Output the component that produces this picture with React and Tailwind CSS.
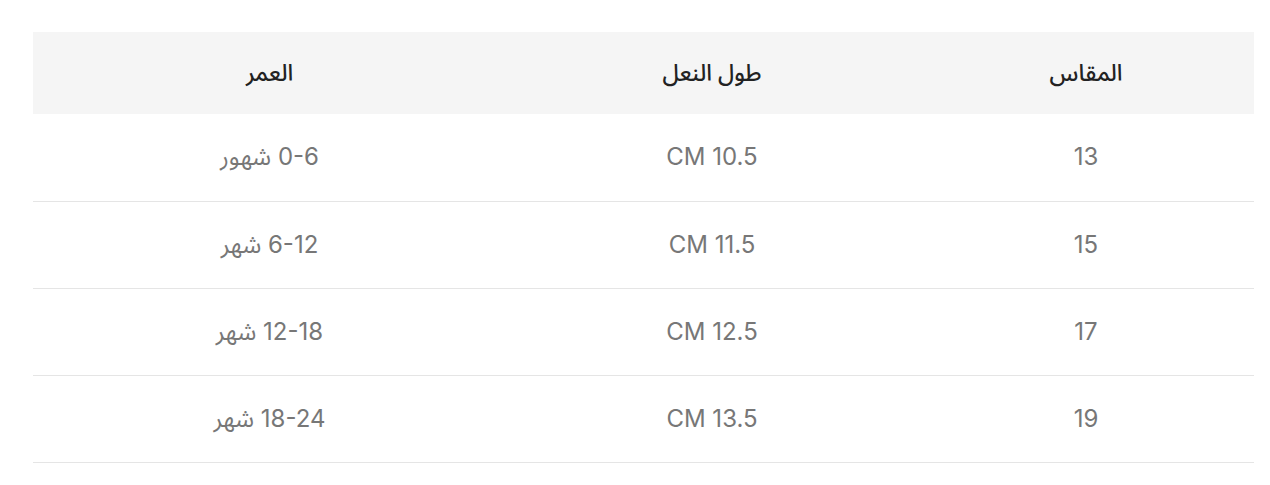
import React from 'react'

const rows = [
    { size: '13', length: 'CM 10.5', age: '0-6 شهور' },
    { size: '15', length: 'CM 11.5', age: '6-12 شهر' },
    { size: '17', length: 'CM 12.5', age: '12-18 شهر' },
    { size: '19', length: 'CM 13.5', age: '18-24 شهر' },
]

const App = () => {
    return (
        <div
            className="min-h-screen bg-white pt-[32px] pl-[33px] pr-[16px]"
            style={{ fontFamily: 'Inter, "Noto Sans Arabic", "DejaVu Sans", sans-serif' }}
        >
            <table dir="rtl" className="w-full border-collapse table-fixed">
                <colgroup>
                    <col className="w-[336px]" />
                    <col className="w-[412px]" />
                    <col />
                </colgroup>
                <thead>
                    <tr className="bg-[#f5f5f5] h-[82px]">
                        <th className="text-center font-medium text-[23px] text-[#222222]">المقاس</th>
                        <th className="text-center font-medium text-[23px] text-[#222222]">طول النعل</th>
                        <th className="text-center font-medium text-[23px] text-[#222222]">العمر</th>
                    </tr>
                </thead>
                <tbody>
                    {rows.map((row) => (
                        <tr key={row.size} className="h-[87px] border-b border-[#e5e5e5]">
                            <td className="text-center text-[24px] text-[#777777]">{row.size}</td>
                            <td className="text-center text-[24px] text-[#777777]">{row.length}</td>
                            <td className="text-center text-[24px] text-[#777777]">{row.age}</td>
                        </tr>
                    ))}
                </tbody>
            </table>
        </div>
    )
}

export default App
